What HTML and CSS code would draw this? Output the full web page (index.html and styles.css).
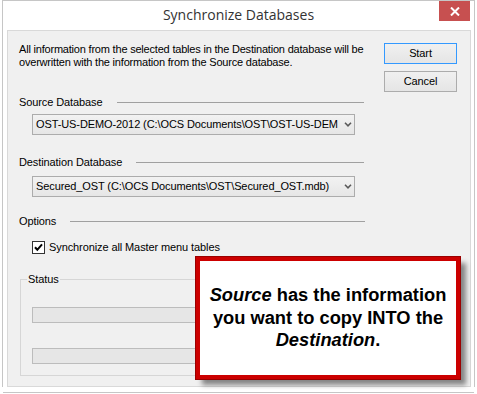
FILE: index.html
```html
<!DOCTYPE html>
<html>
<head>
<meta charset="utf-8">
<title>Synchronize Databases</title>
<link rel="stylesheet" href="styles.css">
</head>
<body>
<div class="frame">
  <div class="titlebar">
    <span></span>
    <div class="title">Synchronize Databases</div>
    <div class="close">
      <svg width="10" height="9" viewBox="0 0 10 9"><path d="M1 0.5 L9 8.5 M9 0.5 L1 8.5" stroke="#fff" stroke-width="2" fill="none"/></svg>
    </div>
  </div>
  <div class="client">
    <div class="top">
      <div class="main">
        <p class="desc">All information from the selected tables in the Destination database will be<br>overwritten with the information from the Source database.</p>
        <div class="sep sep-source"><span>Source Database</span></div>
        <div class="combo combo-source">
          <span class="combo-text">OST-US-DEMO-2012 (C:\OCS Documents\OST\OST-US-DEMO-2012.mdb)</span>
          <span class="combo-arrow"><svg width="8" height="5" viewBox="0 0 8 5"><path d="M1 0.8 L4 3.8 L7 0.8" stroke="#5a5a5a" stroke-width="1.6" fill="none"/></svg></span>
        </div>
        <div class="sep sep-dest"><span>Destination Database</span></div>
        <div class="combo combo-dest">
          <span class="combo-text">Secured_OST (C:\OCS Documents\OST\Secured_OST.mdb)</span>
          <span class="combo-arrow"><svg width="8" height="5" viewBox="0 0 8 5"><path d="M1 0.8 L4 3.8 L7 0.8" stroke="#5a5a5a" stroke-width="1.6" fill="none"/></svg></span>
        </div>
        <div class="sep sep-options"><span>Options</span></div>
        <label class="check-row">
          <span class="checkbox"><svg width="13" height="13" viewBox="0 0 13 13"><rect x="0.5" y="0.5" width="12" height="12" fill="#fff" stroke="#333"/><path d="M3 6.3 L5.3 8.8 L10 3.3" stroke="#000" stroke-width="2" fill="none"/></svg></span>
          <span>Synchronize all Master menu tables</span>
        </label>
      </div>
      <div class="buttons">
        <div class="btn btn-default">Start</div>
        <div class="btn">Cancel</div>
      </div>
    </div>
    <fieldset class="status">
      <legend>Status</legend>
      <div class="bar bar-1"></div>
      <div class="bar bar-2"></div>
    </fieldset>
  </div>
</div>
<div class="bottom-line"></div>
<div class="callout">
  <p><i>Source</i> has the information you want to copy INTO the <i>Destination</i>.</p>
</div>
</body>
</html>
```

FILE: styles.css
```css
html, body {
  margin: 0;
  padding: 0;
}
body {
  width: 477px;
  height: 394px;
  overflow: hidden;
  position: relative;
  background: #fff;
  font-family: "Liberation Sans", Arial, sans-serif;
  font-size: 11px;
  line-height: 13px;
  letter-spacing: -0.1px;
  color: #000;
}
.frame {
  margin-left: 2px;
  width: 473px;
  box-sizing: border-box;
  border: 1px solid #c6c6c6;
  border-bottom: none;
  background: #fff;
  display: flex;
  flex-direction: column;
}
.titlebar {
  height: 29px;
  display: grid;
  grid-template-columns: 1fr auto 1fr;
  align-items: start;
}
.title {
  font-family: "Open Sans", "Noto Sans", sans-serif;
  font-size: 14px;
  letter-spacing: 0;
  line-height: 29px;
  color: #333;
  margin-top: -1px;
}
.close {
  justify-self: end;
  width: 31px;
  height: 20px;
  margin-right: 4px;
  background: #c75050;
  display: flex;
  align-items: center;
  justify-content: center;
}
.close svg {
  display: block;
}
.client {
  margin: 0 3px 0 4px;
  border: 1px solid #d9d9d9;
  background: #f0f0f0;
  padding: 12px 13px 10px 11px;
}
.top {
  display: flex;
  gap: 20px;
}
.main {
  width: 345px;
  display: flex;
  flex-direction: column;
}
.desc {
  margin: 0;
  white-space: nowrap;
  letter-spacing: -0.2px;
}
.sep {
  display: flex;
  align-items: center;
  gap: 14px;
  height: 13px;
}
.sep::after {
  content: "";
  flex: 1;
  height: 1px;
  background: #a0a0a0;
}
.sep-source { margin-top: 27px; }
.sep-dest { margin-top: 21px; }
.sep-options { margin-top: 18px; }
.sep-options::after { margin-right: -1px; }
.combo {
  margin-left: 13px;
  width: 323px;
  height: 21px;
  box-sizing: border-box;
  border: 1px solid #acacac;
  background: linear-gradient(#f2f2f2, #e6e6e6);
  display: flex;
  align-items: center;
}
.combo-source { margin-top: 5px; }
.combo-dest { margin-top: 7px; }
.combo-text {
  flex: 1;
  padding-left: 3px;
  white-space: nowrap;
  overflow: hidden;
}
.combo-arrow {
  width: 16px;
  display: flex;
  align-items: center;
  padding-left: 6px;
  box-sizing: border-box;
}
.combo-arrow svg { display: block; }
.check-row {
  margin-top: 13px;
  margin-left: 13px;
  display: flex;
  align-items: center;
  gap: 4px;
  height: 13px;
}
.checkbox svg { display: block; }
.buttons {
  width: 73px;
  display: flex;
  flex-direction: column;
  gap: 7px;
}
.btn {
  height: 21px;
  box-sizing: border-box;
  border: 1px solid #acacac;
  background: linear-gradient(#f0f0f0, #e5e5e5);
  display: flex;
  align-items: center;
  justify-content: center;
}
.btn-default {
  border-color: #3399ff;
}
.status {
  margin: 19px 1px 0 1px;
  padding: 0 11px 11px 11px;
  border: 1px solid #d6d6d6;
  min-width: 0;
}
.status legend {
  margin-left: -5px;
  padding: 0 1px;
  line-height: 13px;
}
.bar {
  height: 16px;
  box-sizing: border-box;
  border: 1px solid #bcbcbc;
  background: #e6e6e6;
}
.bar-1 { margin-top: 21px; }
.bar-2 { margin-top: 25px; }
.bottom-line {
  margin: 5px 0 0 3px;
  width: 471px;
  height: 1px;
  background: #c6c6c6;
}
.callout {
  position: absolute;
  left: 196px;
  top: 257px;
  width: 264px;
  height: 122px;
  box-sizing: border-box;
  border: 4px solid #cc0000;
  box-shadow: 0 0 0 1px #9a0000, 6px 6px 5px rgba(0, 0, 0, 0.45);
  background: #fff;
  display: flex;
  align-items: center;
  justify-content: center;
}
.callout p {
  margin: 0;
  padding: 0 6px;
  font-family: "Liberation Sans", Arial, sans-serif;
  font-weight: bold;
  font-size: 18.3px;
  letter-spacing: 0;
  line-height: 22.5px;
  text-align: center;
  color: #000;
}
```
